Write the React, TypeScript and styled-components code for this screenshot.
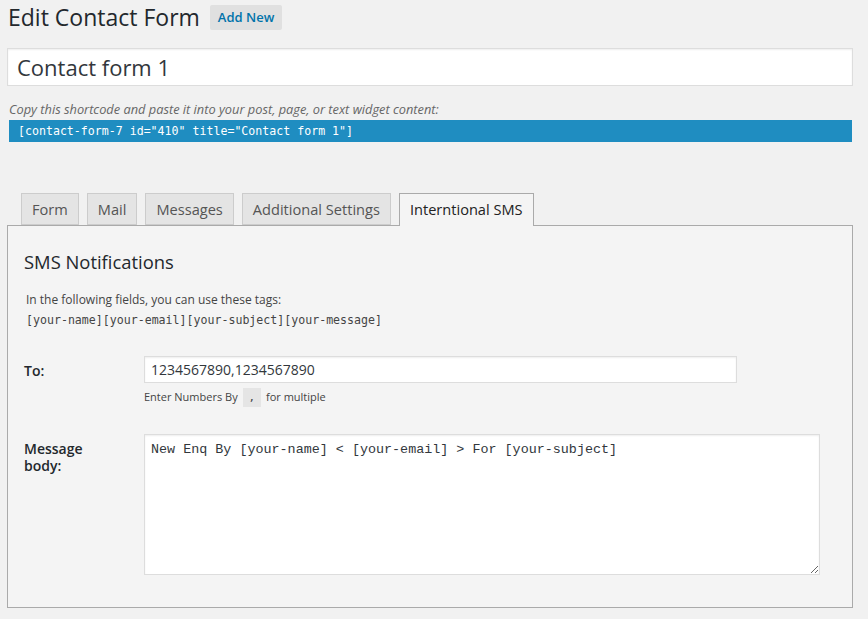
import React from "react";
import styled, { createGlobalStyle } from "styled-components";

const GlobalStyle = createGlobalStyle`
  html, body {
    margin: 0;
    padding: 0;
    background: #f1f1f1;
    font-family: "Open Sans", "Noto Sans", sans-serif;
    color: #444;
  }
`;

const Wrap = styled.div`
  padding: 0 15px 0 7px;
  width: 846px;
`;

const Header = styled.div`
  display: flex;
  align-items: center;
  gap: 10px;
  padding: 4px 0 0 1px;
`;

const Title = styled.h1`
  margin: 0;
  font-size: 23px;
  font-weight: 400;
  line-height: 26px;
  color: #23282d;
`;

const AddNew = styled.a`
  display: inline-block;
  background: #e0e0e0;
  color: #0073aa;
  font-size: 13px;
  font-weight: 600;
  line-height: 25px;
  padding: 0 8px;
  border-radius: 2px;
  text-decoration: none;
`;

const TitleInput = styled.input`
  box-sizing: border-box;
  display: block;
  margin-top: 18px;
  width: 846px;
  height: 38px;
  border: 1px solid #ddd;
  box-shadow: inset 0 1px 2px rgba(0, 0, 0, 0.07);
  background: #fff;
  font-family: "Open Sans", sans-serif;
  font-size: 22px;
  color: #32373c;
  padding: 0 9px;
  outline: none;
`;

const Note = styled.p`
  margin: 14px 0 0 2px;
  font-size: 12.8px;
  font-style: italic;
  line-height: 18px;
  color: #666;
`;

const Shortcode = styled.div`
  box-sizing: border-box;
  margin: 2px 0 0 2px;
  width: 843px;
  height: 22px;
  background: #1f8dc1;
  color: #fff;
  font-family: "DejaVu Sans Mono", monospace;
  font-size: 11.6px;
  line-height: 22px;
  padding: 0 9px;
`;

const Tabs = styled.div`
  display: flex;
  gap: 8px;
  margin: 51px 0 0 14px;
  position: relative;
  z-index: 1;
`;

const Tab = styled.div<{ $active?: boolean }>`
  box-sizing: border-box;
  height: ${(p) => (p.$active ? "33px" : "32px")};
  padding: 0 10px;
  font-size: 14.6px;
  line-height: 30px;
  border: 1px solid ${(p) => (p.$active ? "#aaa" : "#ccc")};
  border-bottom: ${(p) => (p.$active ? "none" : "1px solid #ccc")};
  background: ${(p) => (p.$active ? "#f4f4f4" : "#e4e4e4")};
  color: ${(p) => (p.$active ? "#222" : "#555")};
  margin-bottom: ${(p) => (p.$active ? "-1px" : "0")};
`;

const Panel = styled.div`
  box-sizing: border-box;
  border: 1px solid #aaa;
  background: #f4f4f4;
  height: 383px;
  padding: 24px 16px 0 16px;
`;

const Section = styled.h2`
  margin: 0;
  font-size: 18.4px;
  font-weight: 400;
  line-height: 24px;
  color: #23282d;
`;

const Help = styled.p`
  margin: 16px 0 0 2px;
  font-size: 12px;
  line-height: 20px;
  color: #444;
`;

const Tags = styled.div`
  margin-left: 2px;
  font-family: "DejaVu Sans Mono", monospace;
  font-size: 11.6px;
  line-height: 20px;
  color: #444;
`;

const Row = styled.div<{ $top: number }>`
  display: grid;
  grid-template-columns: 120px 1fr;
  margin-top: ${(p) => p.$top}px;
`;

const Label = styled.label`
  font-size: 14px;
  font-weight: 600;
  color: #23282d;
  line-height: 17px;
  padding-top: 6px;
  width: 70px;
`;

const Field = styled.input`
  box-sizing: border-box;
  width: 593px;
  height: 27px;
  border: 1px solid #ddd;
  box-shadow: inset 0 1px 2px rgba(0, 0, 0, 0.07);
  background: #fff;
  font-family: "Open Sans", sans-serif;
  font-size: 14px;
  color: #32373c;
  padding: 0 6px;
  outline: none;
`;

const Hint = styled.div`
  margin-top: 4px;
  font-size: 11px;
  line-height: 19px;
  color: #444;
`;

const Code = styled.code`
  display: inline-block;
  background: #e5e5e5;
  font-family: "DejaVu Sans Mono", monospace;
  font-size: 11px;
  padding: 0 6px;
  margin: 0 2px;
`;

const Body = styled.textarea`
  box-sizing: border-box;
  width: 676px;
  height: 141px;
  border: 1px solid #ddd;
  box-shadow: inset 0 1px 2px rgba(0, 0, 0, 0.07);
  background: #fff;
  font-family: "Liberation Mono", monospace;
  font-size: 13.4px;
  line-height: 18px;
  color: #32373c;
  padding: 6px 6px;
  resize: vertical;
  outline: none;
`;

const tabs = ["Form", "Mail", "Messages", "Additional Settings", "Interntional SMS"];

export default function App() {
  return (
    <>
      <GlobalStyle />
      <Wrap>
        <Header>
          <Title>Edit Contact Form</Title>
          <AddNew href="#">Add New</AddNew>
        </Header>
        <TitleInput defaultValue="Contact form 1" />
        <Note>Copy this shortcode and paste it into your post, page, or text widget content:</Note>
        <Shortcode>[contact-form-7 id="410" title="Contact form 1"]</Shortcode>

        <Tabs>
          {tabs.map((t, i) => (
            <Tab key={t} $active={i === tabs.length - 1}>
              {t}
            </Tab>
          ))}
        </Tabs>
        <Panel>
          <Section>SMS Notifications</Section>
          <Help>In the following fields, you can use these tags:</Help>
          <Tags>[your-name][your-email][your-subject][your-message]</Tags>

          <Row $top={26}>
            <Label>To:</Label>
            <div>
              <Field defaultValue="1234567890,1234567890" />
              <Hint>
                Enter Numbers By <Code>,</Code> for multiple
              </Hint>
            </div>
          </Row>

          <Row $top={27}>
            <Label>Message body:</Label>
            <Body defaultValue="New Enq By [your-name] < [your-email] > For [your-subject]" />
          </Row>
        </Panel>
      </Wrap>
    </>
  );
}
